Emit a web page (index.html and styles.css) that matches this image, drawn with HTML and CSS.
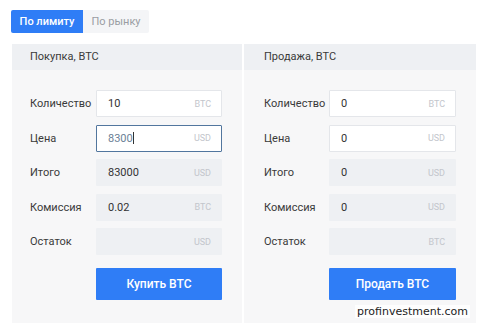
FILE: index.html
```html
<!DOCTYPE html>
<html lang="ru">
<head>
    <meta charset="UTF-8">
    <meta name="viewport" content="width=device-width, initial-scale=1.0">
    <title>Лимитный ордер</title>
    <link rel="stylesheet" href="styles.css">
</head>
<body>

<div class="page">
    <div class="tabs">
        <button class="tab active">По лимиту</button>
        <button class="tab">По рынку</button>
    </div>

    <div class="trade">
        <div class="side">
            <div class="side-head">Покупка, BTC</div>
            <div class="side-body">
                <div class="row">
                    <label>Количество</label>
                    <div class="field"><span class="val">10</span><span class="unit">BTC</span></div>
                </div>
                <div class="row">
                    <label>Цена</label>
                    <div class="field focus"><span class="val">8300<i class="caret"></i></span><span class="unit">USD</span></div>
                </div>
                <div class="row">
                    <label>Итого</label>
                    <div class="field ro"><span class="val">83000</span><span class="unit">USD</span></div>
                </div>
                <div class="row">
                    <label>Комиссия</label>
                    <div class="field ro"><span class="val">0.02</span><span class="unit">BTC</span></div>
                </div>
                <div class="row">
                    <label>Остаток</label>
                    <div class="field ro"><span class="val"></span><span class="unit">USD</span></div>
                </div>
                <div class="row btn-row">
                    <button class="btn">Купить BTC</button>
                </div>
            </div>
        </div>

        <div class="side">
            <div class="side-head">Продажа, BTC</div>
            <div class="side-body">
                <div class="row">
                    <label>Количество</label>
                    <div class="field"><span class="val">0</span><span class="unit">BTC</span></div>
                </div>
                <div class="row">
                    <label>Цена</label>
                    <div class="field"><span class="val">0</span><span class="unit">USD</span></div>
                </div>
                <div class="row">
                    <label>Итого</label>
                    <div class="field ro"><span class="val">0</span><span class="unit">USD</span></div>
                </div>
                <div class="row">
                    <label>Комиссия</label>
                    <div class="field ro"><span class="val">0</span><span class="unit">USD</span></div>
                </div>
                <div class="row">
                    <label>Остаток</label>
                    <div class="field ro"><span class="val"></span><span class="unit">BTC</span></div>
                </div>
                <div class="row btn-row">
                    <button class="btn">Продать BTC</button>
                </div>
            </div>
        </div>
    </div>

    <div class="watermark">profinvestment.com</div>
</div>

</body>
</html>
```

FILE: styles.css
```css
body {
    margin: 0;
    background: #fff;
    font-family: Roboto, "Liberation Sans", sans-serif;
    font-size: 11px;
    color: #3a3a3a;
}

.page {
    position: relative;
    width: 482px;
    height: 323px;
    padding: 10px 0 0 11px;
    box-sizing: border-box;
    overflow: hidden;
}

.tabs {
    display: flex;
    height: 23px;
}

.tab {
    border: none;
    padding: 0;
    font-family: inherit;
    font-size: 11px;
    background: #f4f5f7;
    color: #9a9da3;
    width: 66px;
    border-radius: 0 2px 2px 0;
}

.tab.active {
    width: 72px;
    background: #2f7df6;
    color: #fff;
    font-weight: 500;
    border-radius: 2px 0 0 2px;
}

.trade {
    display: grid;
    grid-template-columns: 230px 232px;
    column-gap: 2px;
    margin-top: 11px;
    margin-left: 1px;
}

.side {
    background: #f7f7f8;
    height: 290px;
}

.side-head {
    height: 26px;
    line-height: 26px;
    background: #eef0f3;
    padding-left: 18px;
}

.side + .side .side-head,
.side + .side .side-body {
    padding-left: 20px;
}

.side-body {
    padding: 20px 0 0 18px;
    display: flex;
    flex-direction: column;
    gap: 7.5px;
}

.row {
    display: flex;
    align-items: center;
}

.row label {
    width: 66px;
}

.side + .side .row label {
    width: 65px;
}

.field {
    display: flex;
    justify-content: space-between;
    align-items: center;
    box-sizing: border-box;
    width: 126px;
    height: 27px;
    padding: 0 10px 0 11px;
    background: #fff;
    border: 1px solid #e4e6ea;
    border-radius: 1px;
}

.field.focus {
    border-color: #52769e;
}

.field.focus .val {
    color: #6b7f96;
}

.field.ro {
    background: #eef0f3;
    border-color: #eef0f3;
}

.val {
    color: #333;
}

.caret {
    display: inline-block;
    width: 1px;
    height: 12px;
    background: #333;
    vertical-align: -2px;
}

.unit {
    font-size: 9px;
    color: #c3c6cc;
}

.btn-row {
    margin-top: 5px;
    padding-left: 66px;
}

.side + .side .btn-row {
    padding-left: 65px;
}

.btn {
    width: 126px;
    height: 32px;
    border: none;
    border-radius: 1px;
    background: #2f7df6;
    color: #fff;
    font-family: inherit;
    font-size: 12px;
    font-weight: 500;
}

.side + .side .field,
.side + .side .btn {
    width: 127px;
}

.watermark {
    position: absolute;
    right: 12px;
    bottom: 5px;
    font-family: "DejaVu Sans", sans-serif;
    font-size: 11px;
    color: #222;
    background: rgba(255, 255, 255, 0.85);
    padding: 0 2px;
}
```
